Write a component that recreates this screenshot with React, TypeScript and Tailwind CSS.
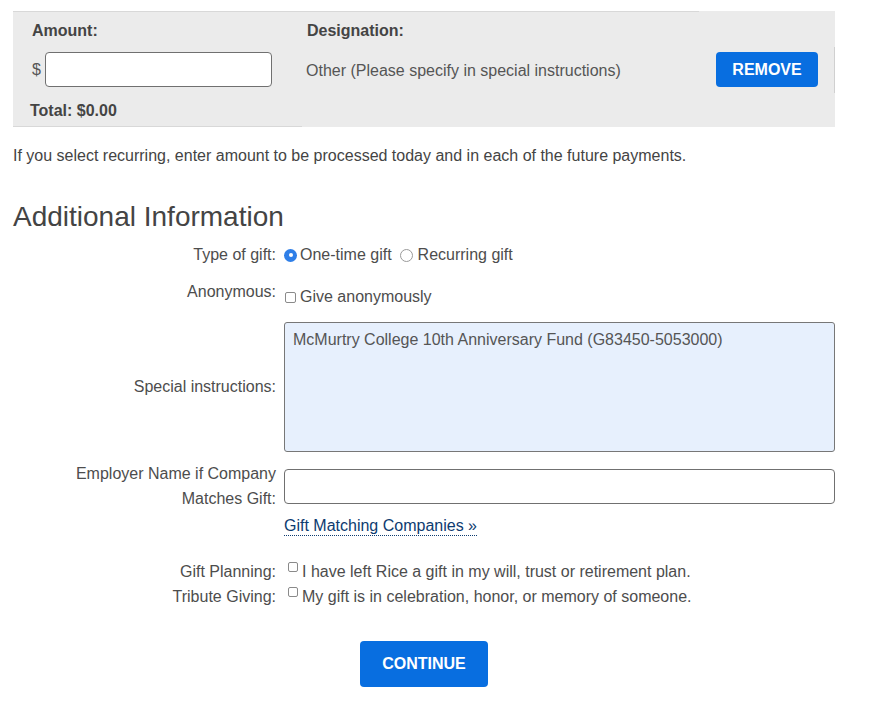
import React from "react";

const font = { fontFamily: '"Liberation Sans", Arial, sans-serif' };

const Radio = ({ checked }: { checked?: boolean }) =>
  checked ? (
    <span className="inline-flex w-[13px] h-[13px] rounded-full bg-[#2f7fe8] items-center justify-center">
      <span className="w-[4px] h-[4px] rounded-full bg-white" />
    </span>
  ) : (
    <span className="inline-block w-[13px] h-[13px] rounded-full border border-[#9a9a9a] bg-white" />
  );

const Check = ({ size = 11 }: { size?: number }) => (
  <span
    className={
      size === 11
        ? "inline-block w-[11px] h-[11px] rounded-[2px] border border-[#8a8a8a] bg-white"
        : "inline-block w-[10px] h-[10px] rounded-[2px] border border-[#8a8a8a] bg-white"
    }
  />
);

const Label = ({ children }: { children: React.ReactNode }) => (
  <div className="text-right text-[16px] leading-[20px] text-[#4d4d4d]">{children}</div>
);

export default function App() {
  return (
    <div style={font} className="w-[892px] min-h-[706px] bg-white text-[16px] text-[#4d4d4d]">
      <div className="ml-[13px] w-[822px] pt-[11px]">
        {/* amount / designation table */}
        <div className="flex bg-[#ebebeb]">
          <div className="w-[289px] border-t border-b border-[#d8d8d8] pl-[19px] pt-[9px] pb-[5px]">
            <div className="font-bold text-[#444] leading-[20px]">Amount:</div>
            <div className="flex items-center mt-[11px]">
              <span className="text-[#555] mr-[4px]">$</span>
              <input className="w-[227px] h-[35px] bg-white border border-[#707070] rounded-[4px] outline-none px-2" />
            </div>
            <div className="font-bold text-[#444] leading-[20px] mt-[14px] ml-[-2px]">Total: $0.00</div>
          </div>
          <div className="w-[397px] border-t border-[#d8d8d8] pl-[5px] pt-[9px]">
            <div className="font-bold text-[#444] leading-[20px]">Designation:</div>
            <div className="text-[#555] leading-[20px] mt-[20px] ml-[-1px]">
              Other (Please specify in special instructions)
            </div>
          </div>
          <div className="flex-1 flex items-start pt-[41px]">
            <button className="ml-[17px] w-[102px] h-[35px] rounded-[4px] bg-[#086ee0] text-white font-bold text-[16px]">
              REMOVE
            </button>
            <div className="ml-auto mt-[-5px] h-[46px] border-r border-[#d0d0d0]" />
          </div>
        </div>

        <p className="mt-[19px] leading-[20px] text-[#444]">
          If you select recurring, enter amount to be processed today and in each of the future payments.
        </p>

        <h2 className="mt-[35px] text-[28px] leading-[32px] text-[#444]">Additional Information</h2>

        <div className="grid grid-cols-[263px_1fr] gap-x-[8px]">
          {/* type of gift */}
          <div className="mt-[12px]">
            <Label>Type of gift:</Label>
          </div>
          <div className="mt-[12px] flex items-center leading-[20px]">
            <Radio checked />
            <span className="ml-[3px]">One-time gift</span>
            <span className="ml-[8px] inline-flex"><Radio /></span>
            <span className="ml-[5px]">Recurring gift</span>
          </div>

          {/* anonymous */}
          <div className="mt-[17px]">
            <Label>Anonymous:</Label>
          </div>
          <div className="mt-[22px] flex items-center leading-[20px]">
            <span className="ml-[1px] mt-[1px] inline-flex"><Check /></span>
            <span className="ml-[4px]">Give anonymously</span>
          </div>

          {/* special instructions */}
          <div className="mt-[15px] flex items-center justify-end">
            <Label>Special instructions:</Label>
          </div>
          <div className="mt-[15px]">
            <textarea
              readOnly
              defaultValue="McMurtry College 10th Anniversary Fund (G83450-5053000)"
              className="block w-[551px] h-[130px] resize-none bg-[#e7f0fd] border border-[#777] rounded-[3px] px-[8px] pt-[7px] leading-[20px] text-[#555] outline-none"
            />
          </div>

          {/* employer */}
          <div className="mt-[9px] text-right leading-[25px] text-[#4d4d4d]">
            Employer Name if Company
            <br />
            Matches Gift:
          </div>
          <div className="mt-[9px] flex items-center">
            <input className="w-[551px] h-[35px] bg-white border border-[#707070] rounded-[4px] outline-none px-2" />
          </div>

          <div />
          <div className="mt-[5px] leading-[20px]">
            <a className="text-[#0d3b70] border-b border-dotted border-[#0d3b70] pb-[1px] cursor-pointer">
              Gift Matching Companies »
            </a>
          </div>

          {/* gift planning */}
          <div className="mt-[23px] text-right leading-[25px]">Gift Planning:</div>
          <div className="mt-[23px] flex items-start leading-[25px]">
            <span className="ml-[4px] mt-[3px] inline-flex"><Check size={10} /></span>
            <span className="ml-[4px]">I have left Rice a gift in my will, trust or retirement plan.</span>
          </div>

          <div className="text-right leading-[25px]">Tribute Giving:</div>
          <div className="flex items-start leading-[25px]">
            <span className="ml-[4px] mt-[3px] inline-flex"><Check size={10} /></span>
            <span className="ml-[4px]">My gift is in celebration, honor, or memory of someone.</span>
          </div>
        </div>

        <div className="flex justify-center mt-[32px]">
          <button className="w-[128px] h-[46px] rounded-[4px] bg-[#086ee0] text-white font-bold text-[16px]">
            CONTINUE
          </button>
        </div>
      </div>
    </div>
  );
}
